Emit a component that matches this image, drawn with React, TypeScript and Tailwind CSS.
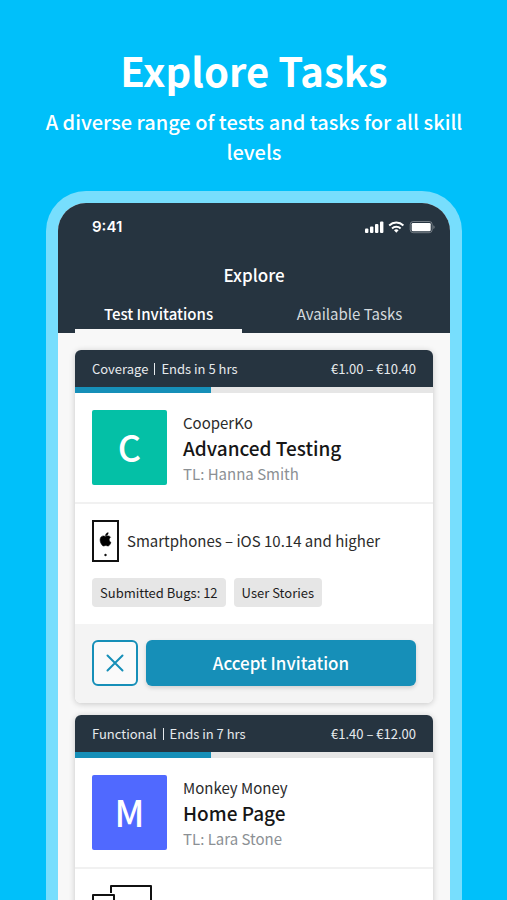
import type { ReactNode } from 'react';

type Task = {
    id: string;
    kind: string;
    ends: string;
    reward: string;
    company: string;
    title: string;
    lead: string;
    initial: string;
    tile: string;
    icon: ReactNode;
    devices?: string;
    tags?: string[];
};

function PhoneIcon() {
    return (
        <svg width="27" height="42" viewBox="0 0 27 42" aria-hidden="true">
            <rect x="1" y="1" width="25" height="40" fill="#fff" stroke="#111" strokeWidth="2" />
            <g transform="translate(5.5 11.3) scale(0.67)" fill="#000">
                <path d="M18.71 19.5c-.83 1.24-1.71 2.45-3.05 2.47-1.34.03-1.77-.79-3.29-.79-1.53 0-2 .77-3.27.82-1.31.05-2.3-1.32-3.14-2.53C4.25 17 2.94 12.45 4.7 9.39c.87-1.52 2.43-2.48 4.12-2.51 1.28-.02 2.5.87 3.29.87.78 0 2.26-1.07 3.81-.91.65.03 2.47.26 3.64 1.98-.09.06-2.17 1.28-2.15 3.81.03 3.02 2.65 4.03 2.68 4.04-.03.07-.42 1.44-1.38 2.83M13 3.5c.73-.83 1.94-1.46 2.94-1.5.13 1.17-.34 2.35-1.04 3.19-.69.85-1.83 1.51-2.95 1.42-.15-1.15.41-2.35 1.05-3.11z" stroke="#000" strokeWidth="0.8" />
            </g>
            <circle cx="13.5" cy="35" r="1.2" fill="#111" />
        </svg>
    );
}

function DevicesIcon() {
    return (
        <svg width="60" height="42" viewBox="0 0 60 42" fill="none" stroke="#111" strokeWidth="2" strokeLinejoin="round" aria-hidden="true">
            <path d="M19 8V1h40v28H25" />
            <rect x="1" y="10" width="21" height="31" />
        </svg>
    );
}

function StatusIcons() {
    return (
        <svg width="70" height="14" viewBox="0 0 70 14" fill="#fff" aria-hidden="true">
            <rect x="0" y="8.5" width="3.4" height="4.5" rx="1" />
            <rect x="5" y="6.5" width="3.4" height="6.5" rx="1" />
            <rect x="10" y="4" width="3.4" height="9" rx="1" />
            <rect x="15" y="1.4" width="3.4" height="11.6" rx="1" />
            <g fill="none" stroke="#fff" strokeWidth="2">
                <path d="M24.2 5.4a10.4 10.4 0 0 1 14.2 0" />
                <path d="M27 8.4a6.3 6.3 0 0 1 8.6 0" />
            </g>
            <path d="M31.3 12.8l-2.3-2.5a3.5 3.5 0 0 1 4.6 0z" />
            <rect x="45.2" y="1.5" width="22" height="11.2" rx="3" fill="none" stroke="#fff" strokeOpacity="0.35" />
            <rect x="46.7" y="3" width="19" height="8.2" rx="1.2" />
            <path d="M68.4 5.2v3.8c1.6-.7 1.6-3.1 0-3.8z" fillOpacity="0.4" />
        </svg>
    );
}

const tasks: Task[] = [
    {
        id: 'advanced-testing',
        kind: 'Coverage',
        ends: 'Ends in 5 hrs',
        reward: '€1.00 – €10.40',
        company: 'CooperKo',
        title: 'Advanced Testing',
        lead: 'TL: Hanna Smith',
        initial: 'C',
        tile: 'bg-[#04c0a6]',
        icon: <PhoneIcon />,
        devices: 'Smartphones – iOS 10.14 and higher',
        tags: ['Submitted Bugs: 12', 'User Stories'],
    },
    {
        id: 'home-page',
        kind: 'Functional',
        ends: 'Ends in 7 hrs',
        reward: '€1.40 – €12.00',
        company: 'Monkey Money',
        title: 'Home Page',
        lead: 'TL: Lara Stone',
        initial: 'M',
        tile: 'bg-[#5069ff]',
        icon: <DevicesIcon />,
    },
];

function TaskCard({ task }: { task: Task }) {
    return (
        <article className="overflow-hidden rounded-md bg-white shadow-[0_1px_6px_rgba(0,0,0,0.2)]">
            <div className="flex items-center justify-between bg-[#263440] px-[17px] h-[37px] text-[13px] text-[#e6eaed]">
                <div className="flex items-center gap-1.5">
                    <span>{task.kind}</span>
                    <span className="h-3 w-px bg-[#e6eaed]" />
                    <span>{task.ends}</span>
                </div>
                <span>{task.reward}</span>
            </div>
            <div className="h-1.5 bg-[#e6e6e6]">
                <div className="h-full w-[38%] bg-[#168fb8]" />
            </div>

            <div className="flex items-start gap-4 border-b-2 border-[#f1f1f1] px-[17px] pt-[17px] pb-4">
                <div className={`flex size-[75px] shrink-0 items-center justify-center rounded-xs pb-1 text-4xl font-medium text-white ${task.tile}`}>
                    {task.initial}
                </div>
                <div className="flex flex-col">
                    <span className="text-[15px] leading-[25px] text-[#2b2b2b]">{task.company}</span>
                    <h2 className="text-[19px] leading-[26px] font-medium text-[#161616]">{task.title}</h2>
                    <span className="text-[15px] leading-[25px] text-[#8b9094]">{task.lead}</span>
                </div>
            </div>

            <div className="px-[17px] pt-4 pb-[17px]">
                <div className="flex items-center gap-2">
                    {task.icon}
                    {task.devices && <span className="text-[15px] text-[#2b2b2b]">{task.devices}</span>}
                </div>
                {task.tags && (
                    <div className="mt-4 flex gap-2">
                        {task.tags.map((tag) => (
                            <span key={tag} className="rounded-sm bg-[#e6e6e6] px-2 text-[13px] leading-[29px] text-[#1d1d1d]">
                                {tag}
                            </span>
                        ))}
                    </div>
                )}
            </div>

            {task.devices && (
                <div className="flex gap-2 bg-[#f4f4f4] px-[17px] pt-4 pb-[17px]">
                    <button aria-label="Decline invitation" className="flex size-[46px] shrink-0 items-center justify-center rounded-md border-2 border-[#168fb8] bg-[#fafafa]">
                        <svg width="18" height="18" viewBox="0 0 18 18" stroke="#168fb8" strokeWidth="2" strokeLinecap="round" aria-hidden="true">
                            <path d="M1.5 1.5l15 15M16.5 1.5l-15 15" />
                        </svg>
                    </button>
                    <button className="flex-1 rounded-md bg-[#168fb8] text-[17px] font-medium text-white shadow-[0_2px_4px_rgba(0,0,0,0.15)]">
                        Accept Invitation
                    </button>
                </div>
            )}
        </article>
    );
}

export default function App() {
    return (
        <div className="flex h-screen flex-col overflow-hidden bg-[#00c0fa] pr-[45px] pl-[46px] font-['Noto_Sans_CJK_SC',sans-serif]">
            <header className="-mx-4 pt-[42px] pb-6 text-center text-white">
                <h1 className="text-[40px] leading-[56px] font-bold">Explore Tasks</h1>
                <p className="mt-[9px] text-xl leading-[30px] font-medium">A diverse range of tests and tasks for all skill levels</p>
            </header>

            <main className="min-h-0 flex-1 rounded-t-[40px] bg-[#77defd] px-3 pt-3">
                <div className="h-full overflow-hidden rounded-t-[28px] bg-[#f8f8f8]">
                    <div className="bg-[#263440] text-white">
                        <div className="flex items-center justify-between pt-3 pr-[15px] pl-[34px] font-['Inter',sans-serif]">
                            <span className="text-[15px] leading-6 font-semibold">9:41</span>
                            <StatusIcons />
                        </div>
                        <h2 className="pt-6 text-center text-[17px] leading-6 font-medium">Explore</h2>
                        <nav className="flex gap-6 px-[17px] pt-3 text-center text-[15px]">
                            <button className="h-[34px] flex-1 border-b-4 border-[#f8f8f8] font-medium">Test Invitations</button>
                            <button className="h-[34px] flex-1 border-b-4 border-transparent text-[#d4dade]">Available Tasks</button>
                        </nav>
                    </div>

                    <div className="flex flex-col gap-3 px-[17px] pt-[17px]">
                        {tasks.map((task) => (
                            <TaskCard key={task.id} task={task} />
                        ))}
                    </div>
                </div>
            </main>
        </div>
    );
}
